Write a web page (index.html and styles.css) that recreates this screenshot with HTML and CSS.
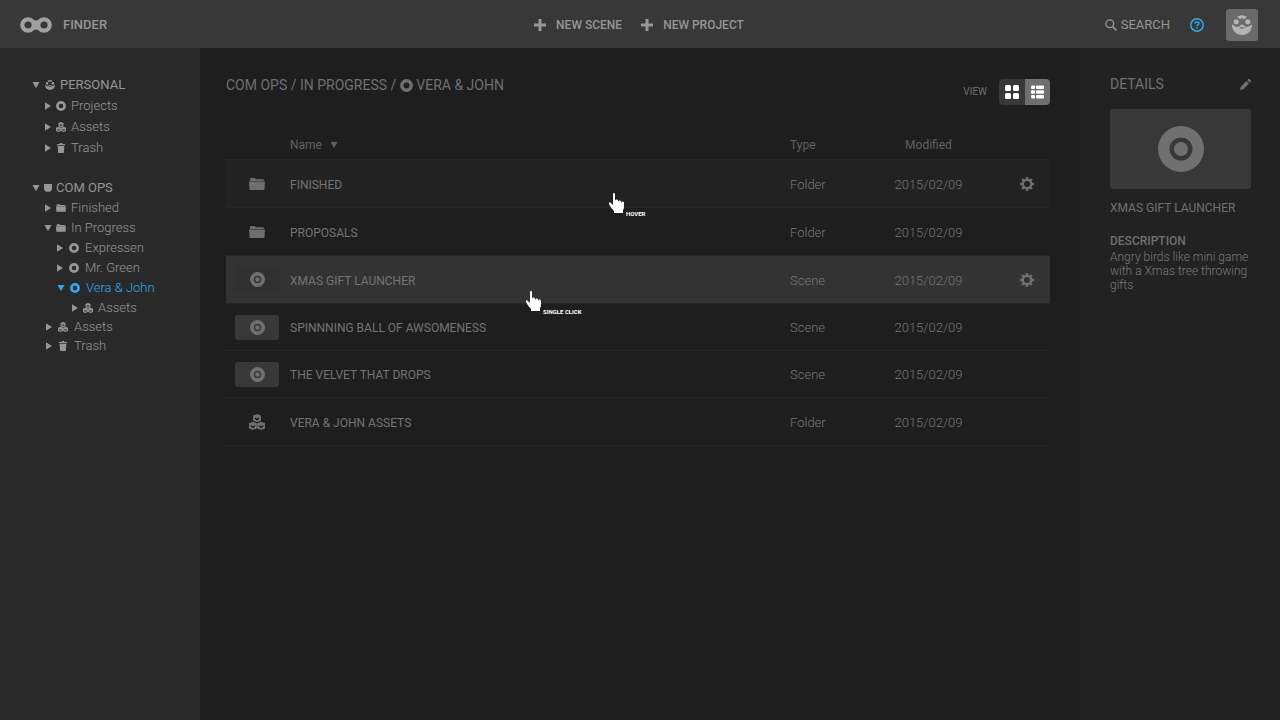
FILE: index.html
```html
<!DOCTYPE html>
<html lang="en">
<head>
<meta charset="utf-8">
<title>Finder</title>
<link rel="stylesheet" href="styles.css">
</head>
<body>
<svg class="sprite" aria-hidden="true">
  <symbol id="face" viewBox="0 0 62 62">
    <path fill="currentColor" d="M15 6Q31 -5 47 6Q40 8 38 13L31 9L24 13Q22 8 15 6Z"/>
    <circle fill="currentColor" cx="13" cy="21" r="8"/><circle fill="currentColor" cx="49" cy="21" r="8"/>
    <path fill="currentColor" fill-rule="evenodd" d="M0 29Q12 40 21 36L31 29L41 36Q50 40 62 29C63 48 49 62 31 62S-1 48 0 29ZM24 39L31 37L38 39V42H24Z"/>
  </symbol>
  <symbol id="ring" viewBox="0 0 10 10"><circle cx="5" cy="5" r="3.600" fill="none" stroke="currentColor" stroke-width="2.700"/></symbol>
  <symbol id="disc" viewBox="0 0 46 46"><path fill="currentColor" fill-rule="evenodd" d="M23 0A23 23 0 1 1 23 46A23 23 0 1 1 23 0ZM23 11.500A11.500 11.500 0 1 0 23 34.500A11.500 11.500 0 1 0 23 11.500Z"/><circle cx="23" cy="23" r="7" fill="currentColor"/></symbol>
  <symbol id="cubes" viewBox="0 0 30 30">
    <path fill="currentColor" fill-rule="evenodd" d="M15 0L22.500 3V12.500L15 15.500L7.500 12.500V3ZM11 6.500V9.500L15 12L19 9.500V6.500L15 8.500ZM7.300 14.500L14.700 17.500V27L7.300 30L0 27V17.500ZM3.300 21V24L7.300 26.500L11.300 24V21L7.300 23ZM22.700 14.500L30 17.500V27L22.700 30L15.300 27V17.500ZM18.700 21V24L22.700 26.500L26.700 24V21L22.700 23Z"/>
  </symbol>
  <symbol id="folder" viewBox="0 0 16 12"><path fill="currentColor" d="M1 3V1Q1 0 2 0H5.500L7 1.200H14Q15 1.200 15 3ZM0 3.600H16L15.400 12H.6Z"/></symbol>
  <symbol id="trash" viewBox="0 0 8 10"><path fill="currentColor" d="M0 1H2.500L3 0H5L5.500 1H8V2.200H0ZM.6 3H7.400L6.800 10H1.200Z"/></symbol>
  <symbol id="shield" viewBox="0 0 8 8"><path fill="currentColor" d="M0 0H8V5Q8 7 6 7.400L4 8L2 7.400Q0 7 0 5Z"/></symbol>
  <symbol id="right" viewBox="0 0 6 8"><path fill="currentColor" d="M0 .3L6 4L0 7.700Z"/></symbol>
  <symbol id="down" viewBox="0 0 8 7"><path fill="currentColor" d="M.5 .5H7.500L4 6.800Z"/></symbol>
  <symbol id="plus" viewBox="0 0 12 12"><path d="M6 0V12M0 6H12" stroke="currentColor" stroke-width="3"/></symbol>
  <symbol id="gear" viewBox="0 0 14 14">
    <path d="M7 0V14M0 7H14M2 2L12 12M12 2L2 12" stroke="currentColor" stroke-width="2.400"/>
    <circle cx="7" cy="7" r="5.400" fill="currentColor"/><circle class="gear-hole" cx="7" cy="7" r="3"/>
  </symbol>
  <symbol id="hand" viewBox="0 0 15 20"><path fill="#fff" d="M4 1Q4 0 5 0T6 1V7.500L7 6.500Q8.500 6 9 7.500V9L10 7.500Q11.500 7 12 8.500V10L13 8.500Q15 8 15 10V14Q15 16 14 17V20H5V18L2 14.500L0 11V9.500H1.500L4 12Z"/></symbol>
</svg>

<header class="topbar">
  <div class="brand">
    <svg class="logo" viewBox="0 0 32 16" role="img" aria-label="Logo"><path fill="currentColor" d="M11 1.500Q16 5.500 21 1.500V14.500Q16 10.500 11 14.500Z"/><g fill="#383838" stroke="currentColor" stroke-width="4.200"><circle cx="8" cy="8" r="5.700"/><circle cx="24" cy="8" r="5.700"/></g></svg>
    <span>FINDER</span>
  </div>
  <div class="actions">
    <button type="button"><svg width="12" height="12"><use href="#plus"/></svg>NEW SCENE</button>
    <button type="button"><svg width="12" height="12"><use href="#plus"/></svg>NEW PROJECT</button>
  </div>
  <div class="tools">
    <button class="search" type="button"><svg width="12" height="12" viewBox="0 0 13 13" fill="none" stroke="currentColor"><circle cx="5.200" cy="5.200" r="4.200" stroke-width="1.500"/><path d="M8.300 8.300L12.300 12.300" stroke-width="1.800"/></svg>SEARCH</button>
    <button class="help" type="button" aria-label="Help"><svg width="14" height="14" viewBox="0 0 14 14" fill="none" stroke="currentColor"><circle cx="7" cy="7" r="6.200" stroke-width="1.500"/><path d="M5 5.600Q5 3.900 7 3.900T9 5.500C9 6.700 7 6.700 7 8.300M7 9.300V10.700" stroke-width="1.500"/></svg></button>
    <button class="avatar" type="button" aria-label="Account"><svg width="20" height="20"><use href="#face"/></svg></button>
  </div>
</header>

<div class="workspace">
  <nav class="tree" aria-label="Projects">
    <ul class="group">
      <li><a class="root personal" href="#"><svg class="arrow-down"><use href="#down"/></svg><svg class="icon"><use href="#face"/></svg>PERSONAL</a></li>
      <li><a class="level-1" href="#"><svg class="arrow"><use href="#right"/></svg><svg class="icon"><use href="#ring"/></svg>Projects</a></li>
      <li><a class="level-1" href="#"><svg class="arrow"><use href="#right"/></svg><svg class="icon"><use href="#cubes"/></svg>Assets</a></li>
      <li><a class="level-1" href="#"><svg class="arrow"><use href="#right"/></svg><svg class="icon"><use href="#trash"/></svg>Trash</a></li>
    </ul>
    <ul class="group dense">
      <li><a class="root" href="#"><svg class="arrow-down"><use href="#down"/></svg><svg class="shield"><use href="#shield"/></svg>COM OPS</a></li>
      <li><a class="level-1" href="#"><svg class="arrow"><use href="#right"/></svg><svg class="icon"><use href="#folder"/></svg>Finished</a></li>
      <li><a class="level-1" href="#"><svg class="arrow open"><use href="#down"/></svg><svg class="icon"><use href="#folder"/></svg>In Progress</a></li>
      <li><a class="level-2" href="#"><svg class="arrow"><use href="#right"/></svg><svg class="icon"><use href="#ring"/></svg>Expressen</a></li>
      <li><a class="level-2" href="#"><svg class="arrow"><use href="#right"/></svg><svg class="icon"><use href="#ring"/></svg>Mr. Green</a></li>
      <li><a class="level-2 current" href="#" aria-current="page"><svg class="arrow open"><use href="#down"/></svg><svg class="icon"><use href="#ring"/></svg>Vera &amp; John</a></li>
      <li><a class="level-3" href="#"><svg class="arrow"><use href="#right"/></svg><svg class="icon"><use href="#cubes"/></svg>Assets</a></li>
      <li><a class="shared" href="#"><svg class="arrow"><use href="#right"/></svg><svg class="icon"><use href="#cubes"/></svg>Assets</a></li>
      <li><a class="shared" href="#"><svg class="arrow"><use href="#right"/></svg><svg class="icon"><use href="#trash"/></svg>Trash</a></li>
    </ul>
  </nav>

  <main class="browser">
    <div class="heading">
      <div class="crumbs"><a href="#">COM OPS</a> / <a href="#">IN PROGRESS</a> / <svg width="13" height="13"><use href="#ring"/></svg> <span>VERA &amp; JOHN</span></div>
      <div class="view">
        <span>VIEW</span>
        <div class="switch">
          <button type="button" aria-label="Grid view"><svg width="14" height="14" viewBox="0 0 14 14" fill="currentColor"><rect width="6" height="6" rx="1.500"/><rect x="8" width="6" height="6" rx="1.500"/><rect y="8" width="6" height="6" rx="1.500"/><rect x="8" y="8" width="6" height="6" rx="1.500"/></svg></button>
          <button class="active" type="button" aria-label="List view" aria-pressed="true"><svg width="14" height="14" viewBox="0 0 14 14" fill="currentColor"><rect y=".5" width="4" height="3.500" rx="1"/><rect x="5" y=".5" width="8" height="3.500" rx="1"/><rect y="5.200" width="4" height="3.500" rx="1"/><rect x="5" y="5.200" width="8" height="3.500" rx="1"/><rect y="10" width="4" height="3.500" rx="1"/><rect x="5" y="10" width="8" height="3.500" rx="1"/></svg></button>
        </div>
      </div>
    </div>

    <table class="files">
      <thead>
        <tr><td class="kind"></td><th class="name" scope="col" aria-sort="descending">Name <svg width="8" height="8"><use href="#down"/></svg></th><th class="type" scope="col">Type</th><th class="modified" scope="col">Modified</th><td class="options"></td></tr>
      </thead>
      <tbody>
        <tr class="hovered"><td class="kind"><svg width="16" height="12"><use href="#folder"/></svg></td><td class="name">FINISHED</td><td>Folder</td><td class="modified">2015/02/09</td><td class="options"><button type="button" aria-label="Options"><svg width="14" height="14"><use href="#gear"/></svg></button></td></tr>
        <tr><td class="kind"><svg width="16" height="12"><use href="#folder"/></svg></td><td class="name">PROPOSALS</td><td>Folder</td><td class="modified">2015/02/09</td><td></td></tr>
        <tr class="selected"><td class="kind"><span class="thumb"><svg width="15" height="15"><use href="#disc"/></svg></span></td><td class="name">XMAS GIFT LAUNCHER</td><td>Scene</td><td class="modified">2015/02/09</td><td class="options"><button type="button" aria-label="Options"><svg width="14" height="14"><use href="#gear"/></svg></button></td></tr>
        <tr class="scene"><td class="kind"><span class="thumb"><svg width="15" height="15"><use href="#disc"/></svg></span></td><td class="name">SPINNNING BALL OF AWSOMENESS</td><td>Scene</td><td class="modified">2015/02/09</td><td></td></tr>
        <tr class="scene"><td class="kind"><span class="thumb"><svg width="15" height="15"><use href="#disc"/></svg></span></td><td class="name">THE VELVET THAT DROPS</td><td>Scene</td><td class="modified">2015/02/09</td><td></td></tr>
        <tr><td class="kind"><svg width="16" height="16"><use href="#cubes"/></svg></td><td class="name">VERA &amp; JOHN ASSETS</td><td>Folder</td><td class="modified">2015/02/09</td><td></td></tr>
      </tbody>
    </table>

    <div class="pointer pointer-hover"><svg width="15" height="20"><use href="#hand"/></svg><span>HOVER</span></div>
    <div class="pointer pointer-click"><svg width="15" height="20"><use href="#hand"/></svg><span>SINGLE CLICK</span></div>
  </main>

  <aside class="details">
    <div class="details-head"><h2>DETAILS</h2><button type="button" aria-label="Edit"><svg width="11" height="11" viewBox="0 0 10 10" fill="currentColor"><path d="M0 10L.7 7L5.900 1.800L8.200 4.100L3 9.300ZM6.600 1.100L7.400 .3Q8 -.3 8.700 .3L9.700 1.300Q10.300 2 9.700 2.600L8.900 3.400Z"/></svg></button></div>
    <div class="preview"><svg width="46" height="46"><use href="#disc"/></svg></div>
    <h3>XMAS GIFT LAUNCHER</h3>
    <h4>DESCRIPTION</h4>
    <p>Angry birds like mini game with a Xmas tree throwing gifts</p>
  </aside>
</div>
</body>
</html>
```
FILE: styles.css
```css
* { box-sizing: border-box; }

body {
  margin: 0;
  min-height: 100vh;
  display: flex;
  flex-direction: column;
  background: #1e1e1e;
  color: #707070;
  font: 13px/20px Roboto, sans-serif;
}

h2, h3, h4, p, ul { margin: 0; padding: 0; font-size: inherit; font-weight: inherit; }
ul { list-style: none; }
a { color: inherit; text-decoration: none; }
svg { flex: none; }
.sprite { position: absolute; width: 0; height: 0; }

button {
  display: flex;
  align-items: center;
  padding: 0;
  border: 0;
  background: none;
  color: inherit;
  font: inherit;
  cursor: pointer;
}

.topbar {
  display: grid;
  grid-template-columns: 1fr auto 1fr;
  align-items: center;
  height: 48px;
  padding: 2px 22px 0 20px;
  background: #383838;
  color: #969696;
}
.brand, .actions, .tools { display: flex; align-items: center; }
.brand { gap: 11px; font-weight: 500; }
.logo { width: 32px; height: 16px; color: #a0a0a0; }
.actions { gap: 19px; font-size: 12px; font-weight: 500; }
.actions button { gap: 10px; }
.tools { justify-content: flex-end; }
.search { gap: 4px; }
.help { margin: 0 22px 0 20px; color: #31a8ee; }
.avatar {
  width: 32px;
  height: 32px;
  justify-content: center;
  border-radius: 3px;
  background: #6a6a6a;
  color: #b4b4b4;
}

.workspace {
  flex: 1;
  display: grid;
  grid-template-columns: 200px 1fr 200px;
}

.tree {
  padding: 26px 0 0 32px;
  background: #292929;
  color: #969696;
}
.group { margin-bottom: 20px; font-weight: 300; }
.tree a { display: flex; align-items: center; gap: 5px; height: 21px; }
.tree .dense a { height: 20px; }
.tree .root { gap: 4px; font-weight: 400; }
.tree .personal { gap: 5px; }
.arrow { width: 6px; height: 8px; }
.arrow-down { width: 8px; height: 8px; }
.open { width: 8px; margin: 0 -1px; }
.icon { width: 10px; height: 10px; }
.shield { width: 8px; height: 8px; }
.tree .level-1 { padding-left: 13px; }
.tree .level-2 { padding-left: 25px; gap: 6px; }
.tree .level-3 { padding-left: 40px; }
.tree .shared { padding-left: 14px; gap: 6px; }
.tree .dense .level-3, .tree .dense .shared { height: 19px; }
.tree .current { padding-left: 26px; color: #31a8ee; }

.browser { position: relative; padding: 26px 30px 0 26px; }
.heading { display: flex; justify-content: space-between; }
.crumbs { font-size: 14px; line-height: 22px; }
.crumbs svg { vertical-align: -2px; }
.view { display: flex; align-items: center; gap: 12px; margin-top: 5px; font-size: 10px; }
.switch { display: flex; border-radius: 4px; overflow: hidden; color: #fff; }
.switch button { width: 26px; height: 26px; justify-content: center; background: #383838; }
.switch .active { width: 25px; background: #6f6f6f; }

.files {
  width: 100%;
  margin-top: 23px;
  table-layout: fixed;
  border-collapse: collapse;
  font-weight: 300;
}
.files td, .files th { padding: 4px 0 0; text-align: left; font-weight: inherit; }
.files thead { color: #606060; }
.files thead tr { height: 31px; border-bottom: 1px solid #272727; }
.files thead th { font-size: 12px; font-weight: 400; }
.files th svg { margin-left: 5px; }
.files tbody { color: #767676; }
.files tbody tr { height: 48px; border-bottom: 1px solid #272727; }
.files tbody .scene { height: 47px; }
.files tbody .scene td { padding-top: 2px; }
.files tbody .hovered { background: #222; }
.files tbody .selected { background: #333; }
.files .kind { width: 64px; padding: 1px 2px 0 0; color: #6f6f6f; text-align: center; }
.files .kind svg { vertical-align: middle; }
.files .name { color: #747474; font-size: 12px; font-weight: 400; }
.files thead .name { color: inherit; }
.files .type { width: 63px; }
.files .modified { width: 151px; text-align: center; }
.files .options { width: 46px; padding-top: 2px; color: #6f6f6f; }
.options button { margin: 0 auto; }
.gear-hole { fill: var(--row-fill); }
.hovered { --row-fill: #222; }
.selected { --row-fill: #333; }
.thumb {
  display: inline-flex;
  align-items: center;
  justify-content: center;
  width: 44px;
  height: 25px;
  border-radius: 3px;
  background: #383838;
  vertical-align: middle;
}
.selected .thumb { background: #313131; }

.pointer {
  position: absolute;
  display: flex;
  align-items: flex-end;
  gap: 2px;
  color: #fff;
  font-size: 6px;
  font-weight: 700;
  line-height: 6px;
  pointer-events: none;
}
.pointer span { margin-bottom: -4px; }
.pointer-hover { left: 409px; top: 145px; }
.pointer-click { left: 326px; top: 243px; }

.details { padding: 26px 29px 0 30px; background: #222; }
.details-head { display: flex; justify-content: space-between; font-size: 14px; }
.preview {
  display: flex;
  align-items: center;
  justify-content: center;
  height: 80px;
  margin: 15px 0 9px;
  border-radius: 3px;
  background: #383838;
}
.details h3, .details h4 { font-size: 12px; }
.details h4 { margin-top: 13px; font-weight: 500; }
.details p { margin-top: -1px; color: #7a7a7a; font-size: 12px; font-weight: 300; line-height: 14px; }
```
